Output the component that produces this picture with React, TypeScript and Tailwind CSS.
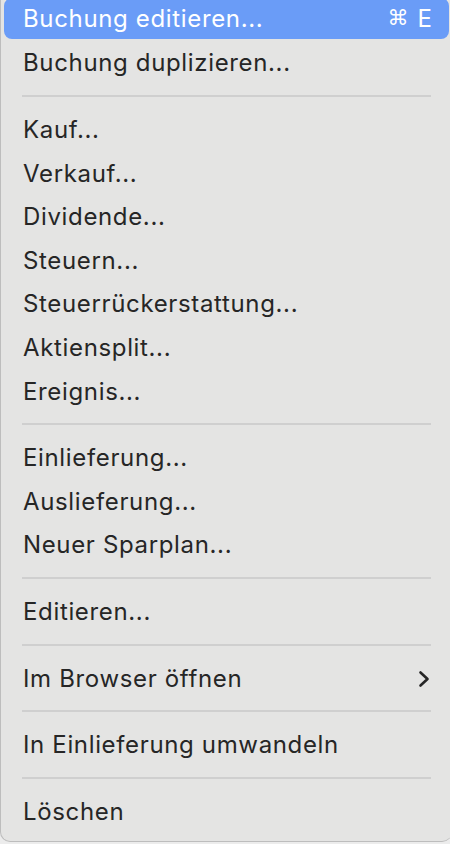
import React from "react";

type Item =
  | { kind: "item"; label: string; shortcut?: string; submenu?: boolean; active?: boolean }
  | { kind: "sep" };

const items: Item[] = [
  { kind: "item", label: "Buchung editieren...", shortcut: "⌘ E", active: true },
  { kind: "item", label: "Buchung duplizieren..." },
  { kind: "sep" },
  { kind: "item", label: "Kauf..." },
  { kind: "item", label: "Verkauf..." },
  { kind: "item", label: "Dividende..." },
  { kind: "item", label: "Steuern..." },
  { kind: "item", label: "Steuerrückerstattung..." },
  { kind: "item", label: "Aktiensplit..." },
  { kind: "item", label: "Ereignis..." },
  { kind: "sep" },
  { kind: "item", label: "Einlieferung..." },
  { kind: "item", label: "Auslieferung..." },
  { kind: "item", label: "Neuer Sparplan..." },
  { kind: "sep" },
  { kind: "item", label: "Editieren..." },
  { kind: "sep" },
  { kind: "item", label: "Im Browser öffnen", submenu: true },
  { kind: "sep" },
  { kind: "item", label: "In Einlieferung umwandeln" },
  { kind: "sep" },
  { kind: "item", label: "Löschen" },
];

function Chevron() {
  return (
    <svg width="12" height="18" viewBox="0 0 12 18" className="mr-[1px]">
      <polyline
        points="2.5,2.5 9.5,9 2.5,15.5"
        fill="none"
        stroke="#262626"
        strokeWidth="2.6"
        strokeLinecap="round"
        strokeLinejoin="round"
      />
    </svg>
  );
}

export default function App() {
  return (
    <div
      className="w-[450px] h-[844px] overflow-hidden bg-[#ececec]"
      style={{ fontFamily: "Inter, 'DejaVu Sans', sans-serif" }}
    >
      <div className="w-[452px] -mt-[2px] bg-[#e4e4e3] rounded-b-[10px] border-l border-b border-[#bdbdbd] pb-[7px] text-[24px] tracking-[0.65px] text-[#262626]">
        {items.map((it, i) => {
          if (it.kind === "sep") {
            return (
              <div key={i} className="h-[23px] pt-[10px]">
                <div className="mx-[21px] h-[2px] bg-[#cfcfcf]" />
              </div>
            );
          }
          if (it.active) {
            return (
              <div key={i} className="h-[43.6px] pb-[2.5px] pl-[3px] pr-[3px]">
                <div className="flex h-full items-center justify-between rounded-[8px] bg-[#6a9cf7] pl-[19px] pr-[17px] text-white">
                  <span>{it.label}</span>
                  <span className="flex items-center gap-[9px] tracking-normal">
                    <span style={{ fontFamily: "'DejaVu Sans', sans-serif" }} className="text-[21px]">⌘</span>
                    <span>E</span>
                  </span>
                </div>
              </div>
            );
          }
          return (
            <div
              key={i}
              className="flex h-[43.6px] items-center justify-between pl-[22px] pr-[21px]"
            >
              <span>{it.label}</span>
              {it.submenu && <Chevron />}
            </div>
          );
        })}
      </div>
    </div>
  );
}
